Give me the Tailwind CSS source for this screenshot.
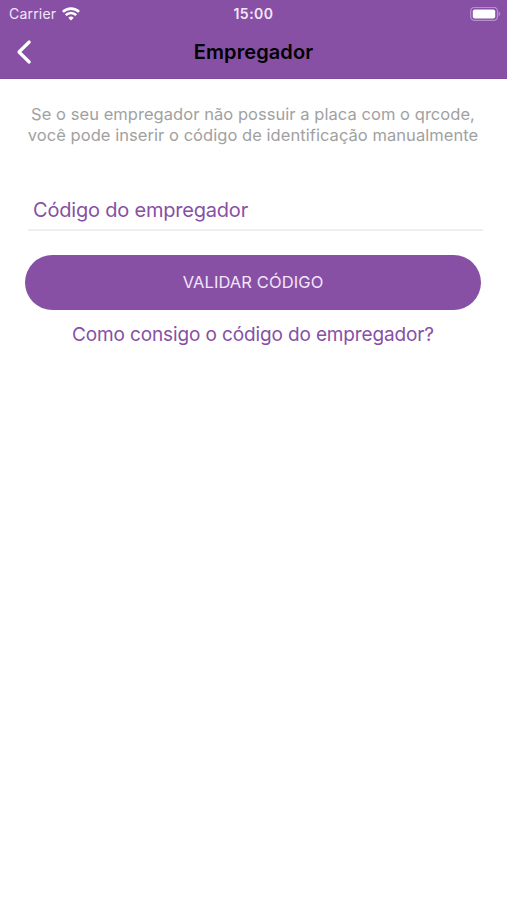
<!DOCTYPE html>
<html lang="pt-BR">
<head>
    <meta charset="UTF-8">
    <meta name="viewport" content="width=device-width, initial-scale=1.0">
    <title>Empregador</title>
    <script src="https://cdn.jsdelivr.net/npm/@tailwindcss/browser@4"></script>
</head>
<body class="bg-white min-h-screen overflow-hidden font-['Inter','Liberation_Sans',sans-serif]">

    <!-- Header -->
    <header class="h-[79px] bg-[#8750a5] border-b border-[#7f4a9c]">
        <!-- Status bar -->
        <div class="grid grid-cols-3 items-center h-[27px] text-[#f3e6fa]">
            <div class="flex items-center gap-[6px] pl-[9px]">
                <span class="text-[14px] leading-[27px] tracking-[0.2px]">Carrier</span>
                <svg class="w-[18px] h-[14px]" viewBox="0 0 18 14" fill="none" stroke="#fff" stroke-width="2.6">
                    <path d="M0.9 4.9a11.6 11.6 0 0 1 16.2 0"/>
                    <path d="M3.8 8.2a7.3 7.3 0 0 1 10.4 0"/>
                    <path d="M9 13.6L6.3 10.8a3.9 3.9 0 0 1 5.4 0z" fill="#fff" stroke="none"/>
                </svg>
            </div>
            <span class="text-center text-[14px] leading-[27px] font-semibold tracking-[0.5px]">15:00</span>
            <div class="flex justify-end pr-[6px]">
                <svg class="w-[31px] h-[14px]" viewBox="0 0 31 14" fill="none">
                    <rect x="0.7" y="0.4" width="26.8" height="13" rx="3.8" stroke="#b58fca" stroke-width="1.3"/>
                    <rect x="2.8" y="2.4" width="22.4" height="9" rx="2" fill="#fff"/>
                    <path d="M28.6 4.6c2 .6 2 4 0 4.6z" fill="#b58fca"/>
                </svg>
            </div>
        </div>
        <!-- Title bar -->
        <div class="grid grid-cols-[60px_1fr_60px] items-center h-[50px]">
            <button class="pl-[16px]" aria-label="Voltar">
                <svg class="w-[16px] h-[26px]" viewBox="0 0 16 26" fill="none" stroke="#fff" stroke-width="3.2" stroke-linecap="round" stroke-linejoin="round">
                    <path d="M13.2 3L3 13L13.2 23"/>
                </svg>
            </button>
            <h1 class="text-center text-[20px] font-semibold tracking-[0.1px] text-black">Empregador</h1>
        </div>
    </header>

    <main class="pt-[25px] pl-[25px] pr-[26px]">
        <p class="text-center text-[16.5px] leading-[21px] tracking-[0.05px] text-[#a1a1a1] whitespace-nowrap">
            Se o seu empregador não possuir a placa com o qrcode,<br>
            você pode inserir o código de identificação manualmente
        </p>

        <!-- Employer code -->
        <div class="mt-[43px] ml-[3px] -mr-[2px] h-[42px] pl-[5px] border-b-2 border-[#efeff0]">
            <label class="block text-[20px] leading-[42px] tracking-[-0.2px] text-[#8750a5]">Código do empregador</label>
        </div>

        <button class="block mt-[24px] w-full h-[55px] rounded-full bg-[#8750a5] text-[16.5px] tracking-[0.1px] text-[#f3e6fa]">VALIDAR CÓDIGO</button>
        <a class="block mt-[10px] text-center text-[19px] leading-[30px] tracking-[-0.13px] text-[#8750a5]">Como consigo o código do empregador?</a>
    </main>

</body>
</html>
